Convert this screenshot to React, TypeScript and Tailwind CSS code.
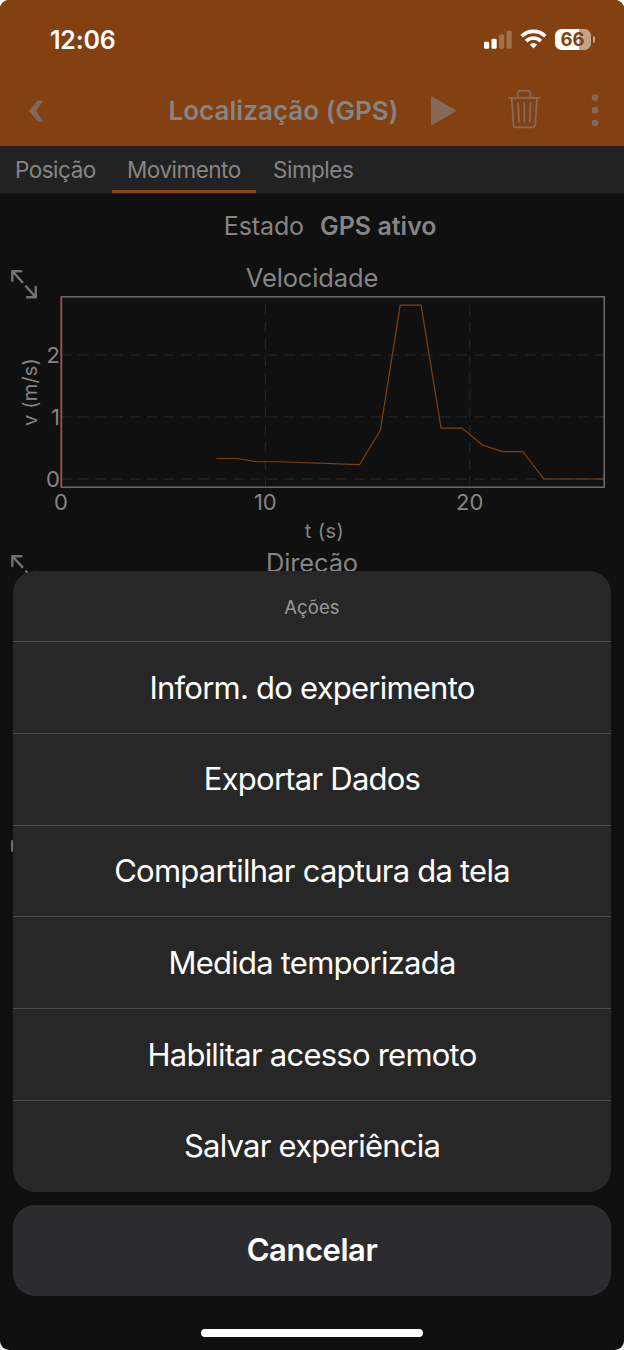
import { useState, type ReactNode } from 'react';
import clsx from 'clsx';

const TABS = [
  { id: 'position', label: 'Posição', className: 'w-28 pl-[15px]' },
  { id: 'motion', label: 'Movimento', className: 'w-36 pl-[15px]' },
  { id: 'simple', label: 'Simples', className: 'w-28 pl-[17px]' },
];

const ACTIONS = [
  'Inform. do experimento',
  'Exportar Dados',
  'Compartilhar captura da tela',
  'Medida temporizada',
  'Habilitar acesso remoto',
  'Salvar experiência',
];

// [t in s, v in m/s]
const SPEED: [number, number][] = [
  [7.61, 0.33],
  [8.61, 0.33],
  [9.6, 0.278],
  [10.7, 0.278],
  [14.61, 0.23],
  [15.63, 0.79],
  [16.6, 2.8],
  [17.62, 2.8],
  [18.6, 0.82],
  [19.62, 0.82],
  [20.62, 0.547],
  [21.6, 0.442],
  [22.6, 0.442],
  [23.63, 0],
  [26.57, 0],
];

const tx = (t: number) => 61 + t * 20.435;
const vy = (v: number) => 183 - v * 62.1;

function StatusBar() {
  return (
    <div className="flex h-[75px] items-start justify-between pl-[50px] pr-[29.5px] pt-[24px]">
      <span className="text-[25px] font-semibold leading-8 tracking-[-0.2px] text-white">12:06</span>
      <div className="flex items-center pt-[5px]">
        <svg width="28" height="21" viewBox="0 0 28 21" fill="#fff">
          <rect x="0" y="12.7" width="5.2" height="7.1" rx="1.4" />
          <rect x="7.5" y="9.8" width="5.2" height="10" rx="1.4" />
          <rect x="15" y="5.6" width="5.2" height="14.2" rx="1.4" opacity="0.25" />
          <rect x="22.5" y="1.8" width="5.2" height="18" rx="1.4" opacity="0.25" />
        </svg>
        <svg className="ml-2" width="27" height="21" viewBox="0 0 27 21" fill="none" stroke="#fff" strokeWidth="3.6">
          <path d="M1.7 7.2a16.8 16.8 0 0 1 23.6 0" />
          <path d="M6.1 12.1a10.5 10.5 0 0 1 14.8 0" />
          <path d="M13.5 19.4l-3.7-3.8a5.3 5.3 0 0 1 7.4 0z" fill="#fff" stroke="none" />
        </svg>
        <div className="ml-2 flex h-[21px] w-9 items-center justify-center rounded-[6.5px] bg-[linear-gradient(90deg,#fff_68%,#c3a38b_68%)] text-[18.5px] font-bold leading-none text-[#834112]">
          66
        </div>
        <div className="ml-[2px] h-[7px] w-[2px] rounded-r-full bg-[#c3a38b]" />
      </div>
    </div>
  );
}

function NavBar() {
  return (
    <div className="flex h-[71px] items-center pl-[28px]">
      <svg width="16" height="22" viewBox="0 0 16 22" fill="#7f6a5b">
        <path d="M9.7 0.5h5.6L8.2 11l7.1 10.5H9.7L0.8 11z" />
      </svg>
      <h1 className="ml-[124.5px] w-[259.5px] whitespace-nowrap text-[26px] font-semibold leading-8 tracking-[0.04px] text-[#858585]">
        Localização (GPS)
      </h1>
      <svg className="ml-px" width="28" height="30" viewBox="0 0 28 30" fill="#836a59">
        <path d="M2 1.6c0-1.1.8-1.4 1.7-.9l22.5 13.1c.9.6.9 1.4 0 2l-22.5 13c-.9.6-1.7.2-1.7-.8z" />
      </svg>
      <svg className="mb-[3px] ml-[50px]" width="36" height="40" viewBox="0 0 36 40" fill="none" stroke="#836a59" strokeWidth="1.8">
        <path d="M1.5 8.9h32M10.8 8V4.5c0-1.7.8-2.6 2.5-2.6h7.6c1.7 0 2.5.9 2.5 2.6V8" />
        <path d="M4.7 9l1.7 26.3c.2 2 1.2 3 3.2 3h15.5c2 0 3-1 3.2-3L30 9" />
        <path d="M11.2 13.5l.8 20M17.3 13.5v20M23.5 13.5l-.8 20" />
      </svg>
      <svg className="ml-[48px]" width="8" height="34" viewBox="0 0 8 34" fill="#7f6a5b">
        <circle cx="4" cy="3.5" r="3.3" />
        <circle cx="4" cy="16.2" r="3.3" />
        <circle cx="4" cy="29" r="3.3" />
      </svg>
    </div>
  );
}

function ExpandIcon() {
  return (
    <svg
      width="28"
      height="31"
      viewBox="0 0 28 31"
      fill="none"
      stroke="#727272"
      strokeWidth="2.4"
      strokeLinecap="round"
      strokeLinejoin="round"
    >
      <path d="M2.3 11.7V2.2h9M2.6 2.5l9.8 10.6" />
      <path d="M25.8 18v10.2h-8.7M25.5 27.9L16 17.4" />
    </svg>
  );
}

function GraphTitle({ children }: { children?: ReactNode }) {
  return (
    <div className="flex h-[37px] items-center">
      <div className="w-[61px] pl-[10px] pt-[14px]">
        <ExpandIcon />
      </div>
      <h2 className="w-[502px] text-center text-[25.5px] leading-8 tracking-[-0.15px]">{children}</h2>
    </div>
  );
}

function SpeedGraph() {
  return (
    <svg className="block" width="624" height="248" viewBox="0 0 624 248" fontSize="22" fill="#858585">
      <g stroke="#242424" strokeWidth="1.3">
        {[0, 1, 2].map((v) => (
          <path key={v} d={`M61 ${vy(v)}H604`} strokeDasharray="10.5 6.7" />
        ))}
        {[10, 20].map((t) => (
          <path key={t} d={`M${tx(t)} 191V1`} strokeDasharray="10.5 6.7" />
        ))}
      </g>
      <polyline
        points={SPEED.map(([t, v]) => `${tx(t)},${vy(v)}`).join(' ')}
        fill="none"
        stroke="#80400f"
        strokeWidth="1.2"
      />
      <rect x="61.5" y="0.8" width="542.7" height="190.4" fill="none" stroke="#737373" strokeWidth="1.4" />
      <path d="M61 0.5V191.5" stroke="#a5434a" strokeWidth="1.2" />
      {[0, 1, 2].map((v) => (
        <text key={v} x="60" y={vy(v) + 7.8} textAnchor="end">
          {v}
        </text>
      ))}
      {[0, 10, 20].map((t) => (
        <text key={t} x={tx(t)} y="213.5" textAnchor="middle">
          {t}
        </text>
      ))}
      <text x="324.5" y="242" fontSize="20" letterSpacing="0.4" textAnchor="middle">
        t (s)
      </text>
      <text transform="translate(37 96) rotate(-90)" fontSize="20" letterSpacing="0.2" textAnchor="middle">
        v (m/s)
      </text>
    </svg>
  );
}

function ActionSheet({ onClose }: { onClose: () => void }) {
  return (
    <div className="absolute inset-x-[13px] top-[571px] flex flex-col gap-[13px]">
      <div className="h-[620.5px] overflow-hidden rounded-[22px] bg-[#272727]">
        <div className="flex h-[70px] items-center justify-center pt-[3px] text-[18.5px] tracking-[0.1px] text-[#989898]">Ações</div>
        {ACTIONS.map((label) => (
          <button
            key={label}
            type="button"
            className="flex h-[91.75px] w-full items-center justify-center border-t border-[#4b4b4b] pt-px text-[31px] tracking-[-0.77px] text-white"
          >
            {label}
          </button>
        ))}
      </div>
      <button
        type="button"
        onClick={onClose}
        className="h-[91px] rounded-[22px] bg-[#2c2c2e] text-[31px] font-semibold tracking-[-0.45px] text-white"
      >
        Cancelar
      </button>
      <div className="mx-auto mt-5 h-2 w-[222px] rounded-full bg-white" />
    </div>
  );
}

export default function App() {
  const [tab, setTab] = useState('motion');
  const [sheetOpen, setSheetOpen] = useState(true);

  return (
    <div className="h-[1350px] w-[624px] bg-white font-['Inter','Liberation_Sans',sans-serif]">
      <div className="relative h-full overflow-hidden rounded-[9px] bg-[#101010] text-[#858585]">
        <header className="bg-[#834112]">
          <StatusBar />
          <NavBar />
        </header>
        <nav className="flex h-[48px] border-b border-[#191919] bg-[#222222] text-[22.5px] tracking-[-0.5px]">
          {TABS.map((item) => (
            <button
              key={item.id}
              type="button"
              onClick={() => setTab(item.id)}
              className={clsx(
                'h-[47px] border-b-[3px] pt-1 text-left whitespace-nowrap',
                item.className,
                tab === item.id ? 'border-[#8f4513]' : 'border-transparent',
              )}
            >
              {item.label}
            </button>
          ))}
        </nav>
        <main>
          <div className="flex h-[65px] items-center gap-4 text-[25px]">
            <span className="w-[304px] text-right tracking-[-0.1px]">Estado</span>
            <span className="font-semibold">GPS ativo</span>
          </div>
          <section className="h-[285px]">
            <GraphTitle>Velocidade</GraphTitle>
            <SpeedGraph />
          </section>
          <section className="h-[285px]">
            <GraphTitle>Direção</GraphTitle>
          </section>
          <section>
            <GraphTitle />
          </section>
        </main>
        {sheetOpen && <ActionSheet onClose={() => setSheetOpen(false)} />}
      </div>
    </div>
  );
}
